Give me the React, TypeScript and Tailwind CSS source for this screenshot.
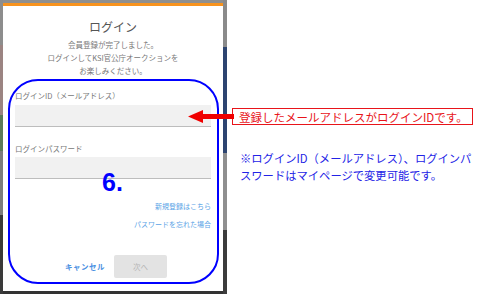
import React from "react";

const jp = { fontFamily: '"Noto Sans CJK JP", "Noto Sans", sans-serif' };

export default function App() {
  return (
    <div className="relative flex w-[478px] h-[294px] overflow-hidden bg-white" style={jp}>
      {/* backdrop behind modal */}
      <div className="flex w-[227px] h-full shrink-0">
        <div className="flex flex-col w-[3px] h-full">
          <div className="h-[45px] bg-[#8d8d8d]" />
          <div className="h-[70px] bg-[#9b8482]" />
          <div className="h-[36px] bg-[#5c7a5a]" />
          <div className="h-[64px] bg-[#7d7d7d]" />
          <div className="flex-1 bg-[#3a3a3a]" />
        </div>
        <div className="flex flex-col w-[220px] h-full bg-[#8a8a8a]">
          <div className="h-[3px] bg-[#8f8f8f]" />
          <div className="flex flex-col h-[288px] bg-white">
            <div className="h-[3px] bg-[#f7931e]" />
            <div className="h-[14px]" />
            <div className="text-center text-[12px] leading-[14px] text-[#555]">ログイン</div>
            <div className="h-[4px]" />
            <div className="flex flex-col items-center text-[7.5px] leading-[13px] text-[#777] whitespace-nowrap">
              <span>会員登録が完了しました。</span>
              <span>ログインしてKSI官公庁オークションを</span>
              <span>お楽しみください。</span>
            </div>
            <div className="flex flex-col px-[12px] pt-[14px]">
              <div className="text-[7.5px] leading-[10px] text-[#777] whitespace-nowrap">ログインID（メールアドレス）</div>
              <div className="mt-[4px] h-[22px] bg-[#f1f1f1] border-b border-[#bdbdbd]" />
              <div className="mt-[17px] text-[7.5px] leading-[10px] text-[#777]">ログインパスワード</div>
              <div className="mt-[3px] h-[22px] bg-[#f1f1f1] border-b border-[#bdbdbd]" />
              <div className="flex flex-col items-end mt-[22px] gap-[8px] text-[7px] leading-[10px] text-[#5aa3e6] whitespace-nowrap">
                <span>新規登録はこちら</span>
                <span>パスワードを忘れた場合</span>
              </div>
              <div className="flex items-center mt-[26px] ml-[50px] gap-[9px]">
                <span className="text-[7.5px] leading-[10px] text-[#4a90e2] font-bold tracking-[0.5px] whitespace-nowrap">キャンセル</span>
                <div className="flex items-center justify-center w-[53px] h-[23px] rounded-[2px] bg-[#e3e3e3] text-[7.5px] text-[#b5b5b5]">次へ</div>
              </div>
            </div>
          </div>
          <div className="flex-1 bg-[#333]" />
        </div>
        <div className="flex flex-col w-[4px] h-full">
          <div className="h-[47px] bg-[#8a8a8a]" />
          <div className="h-[106px] bg-[#2d4470]" />
          <div className="h-[77px] bg-[#8f8f8f]" />
          <div className="flex-1 bg-[#3c3c3c]" />
        </div>
      </div>

      {/* right annotation area */}
      <div className="flex flex-col pl-[5px] pt-[108px]">
        <div className="flex items-center w-[241px] h-[17px] border border-[#e8141a] pl-[6px] text-[11.5px] leading-[14px] text-[#e8141a] whitespace-nowrap">
          登録したメールアドレスがログインIDです。
        </div>
        <div className="mt-[25px] pl-[8px] text-[11.3px] leading-[17px] text-[#2323e6] whitespace-nowrap">
          <div>※ログインID（メールアドレス）、ログインパ</div>
          <div>スワードはマイページで変更可能です。</div>
        </div>
      </div>

      {/* overlays */}
      <div className="absolute left-[8px] top-[79px] w-[211px] h-[205px] rounded-[30px] border-2 border-[#0000ff] pointer-events-none" />
      <div
        className="absolute left-[102px] top-[168px] text-[25px] leading-[28px] font-bold text-[#0000ff]"
        style={{ fontFamily: '"Liberation Sans", Arial, sans-serif' }}
      >
        6.
      </div>
      <svg className="absolute left-[188px] top-[109px]" width="46" height="15" viewBox="0 0 46 15">
        <rect x="14" y="5" width="32" height="5" fill="#f00000" />
        <polygon points="0,7.5 15,1 15,14" fill="#f00000" />
      </svg>
    </div>
  );
}
